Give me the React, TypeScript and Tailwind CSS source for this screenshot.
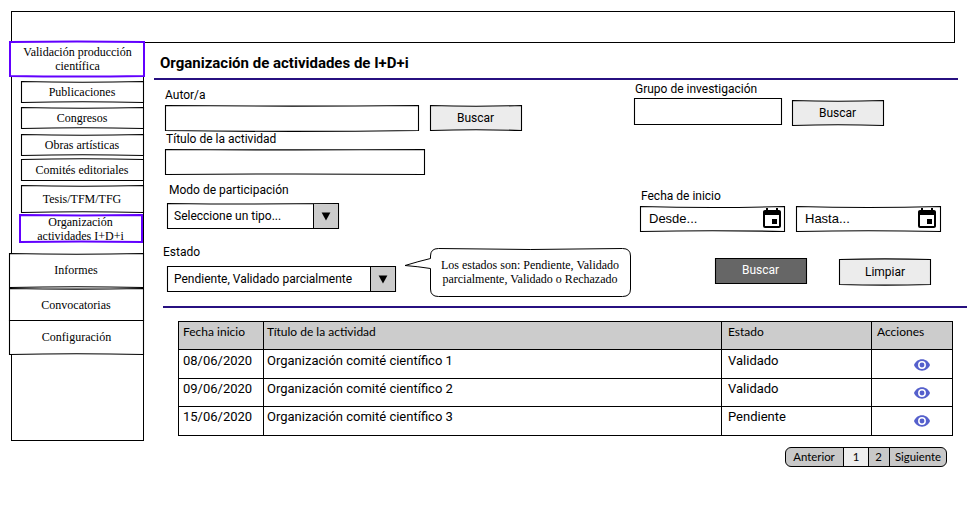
import type { ReactNode } from "react";
import { MdEvent } from "react-icons/md";

type BoxProps = {
  w: number;
  h: number;
  /** Vertical bow of the top and bottom strokes; positive bends downwards. */
  top?: number;
  bottom?: number;
  stroke?: string;
  fill?: string;
  thick?: number;
  className: string;
  children?: ReactNode;
};

/** A box whose outline is slightly bowed, as if drawn by hand. */
function Box({ w, h, top = 0, bottom = 0, stroke = "#000", fill = "#fff", thick = 1.1, className, children }: BoxProps) {
  const i = thick > 1.5 ? thick / 2 : 0.5;
  return (
    <div className={`relative isolate flex shrink-0 ${className}`}>
      <svg viewBox={`0 0 ${w} ${h}`} className="absolute inset-0 -z-10 h-full w-full overflow-visible" aria-hidden="true">
        <path
          d={`M${i} ${i}Q${w / 2} ${i + top * 2} ${w - i} ${i}V${h - i}Q${w / 2} ${h - i + bottom * 2} ${i} ${h - i}Z`}
          fill={fill}
          stroke={stroke}
          strokeWidth={thick}
        />
      </svg>
      {children}
    </div>
  );
}

const serif = "font-['Liberation_Serif',serif] text-[12px] leading-[14px]";
const label = "text-[12px] leading-[14px] whitespace-nowrap";

function Sidebar() {
  const item = `items-center justify-center text-center ${serif}`;
  return (
    <nav className="ml-[11px] flex h-[398px] w-[133px] shrink-0 flex-col border-x border-b border-black">
      <Box w={136} h={36} top={-0.5} bottom={0.5} thick={2} stroke="#6200ff" className={`-mt-[2px] -ml-[3px] h-[36px] w-[136px] pl-px ${item}`}>
        <span>Validación producción<br />científica</span>
      </Box>
      <Box w={123} h={22} top={0.7} bottom={-0.7} className={`mt-[4px] ml-[9px] h-[22px] w-[123px] pr-px ${item}`}>Publicaciones</Box>
      <Box w={123} h={22} top={0.7} bottom={-0.7} className={`mt-[4px] ml-[9px] h-[22px] w-[123px] pr-px ${item}`}>Congresos</Box>
      <Box w={123} h={22} top={0.7} bottom={-0.7} className={`mt-[5px] ml-[9px] h-[22px] w-[123px] pr-px ${item}`}>Obras artísticas</Box>
      <Box w={123} h={22} top={-0.7} className={`mt-[3px] ml-[9px] h-[22px] w-[123px] pr-px ${item}`}>Comités editoriales</Box>
      <Box w={123} h={28} top={0.7} bottom={-0.7} className={`mt-[4px] ml-[9px] h-[28px] w-[123px] pr-px ${item}`}>Tesis/TFM/TFG</Box>
      <Box w={124} h={29} top={0.4} bottom={-0.4} thick={2} stroke="#6200ff" className={`mt-px ml-[7px] h-[29px] w-[124px] pt-[1px] pr-px ${item}`}>
        <span>Organización<br />actividades I+D+i</span>
      </Box>
      <Box w={135} h={35} top={0.8} bottom={-0.7} className={`mt-[10px] -ml-[3px] h-[35px] w-[135px] pr-px pb-[2px] ${item}`}>Informes</Box>
      <Box w={135} h={33} top={0.6} className={`-ml-[3px] h-[33px] w-[135px] pt-px pr-px ${item}`}>Convocatorias</Box>
      <Box w={135} h={35} bottom={-0.8} className={`-mt-px -ml-[3px] h-[35px] w-[135px] pb-[2px] ${item}`}>Configuración</Box>
    </nav>
  );
}

function Arrow() {
  return (
    <svg viewBox="0 0 10 9" className="mt-px h-[9px] w-[10px]" aria-hidden="true">
      <path d="M.6.6H9.4L5 8.6Z" fill="#000" />
    </svg>
  );
}

function Eye() {
  return (
    <svg viewBox="0 0 16 12" className="ml-px h-[12px] w-[16px]" aria-hidden="true">
      <path d="M0 6C1.3 2.7 4.3.3 8 .3S14.7 2.7 16 6C14.7 9.3 11.7 11.7 8 11.7S1.3 9.3 0 6Z" fill="#5560cc" />
      <circle cx="8" cy="6" r="3.200" fill="none" stroke="#fff" strokeWidth="1.500" />
    </svg>
  );
}

function Callout() {
  return (
    <div className={`relative isolate flex h-[49px] w-[201px] items-center justify-center pr-px pb-[2px] text-center ${serif}`}>
      <svg viewBox="0 0 201 49" className="absolute inset-0 -z-10 h-full w-full overflow-visible" aria-hidden="true">
        <path
          d="M8.5.5Q100 2.5 192.5.5Q200.5.5 200.5 8V41Q200.5 48.5 192.5 48.5H8.5Q.5 48.5.5 41V20.5Q-12 18.5-25 17.5Q-12 13.5.5 10.5V8Q.5.5 8.5.5Z"
          fill="#fff"
          stroke="#000"
        />
      </svg>
      <span>Los estados son: Pendiente, Validado<br />parcialmente, Validado o Rechazado</span>
    </div>
  );
}

function DateField({ text, inset }: { text: string; inset: string }) {
  return (
    <Box w={145} h={26} top={1} bottom={-0.8} className={`h-[26px] w-[145px] items-center justify-between pl-[9px] font-['Liberation_Sans',sans-serif] text-[13px] ${inset}`}>
      <span>{text}</span>
      <MdEvent className="size-[24px]" />
    </Box>
  );
}

function Filters() {
  const button = "h-[26px] w-[92px] items-center justify-center text-[12px]";
  return (
    <section className="flex h-[226px]">
      <div className="flex w-[480px] shrink-0 flex-col">
        <div className={`mt-[8px] ml-[11px] ${label}`}>Autor/a</div>
        <div className="mt-[3px] ml-[11px] flex gap-[11px]">
          <Box w={254} h={26} top={0.6} bottom={0.9} className="h-[26px] w-[254px]" />
          <Box w={92} h={26} top={0.7} bottom={-0.7} fill="#ececec" className={`pr-px ${button}`}>Buscar</Box>
        </div>
        <div className={`mt-[1px] ml-[12px] ${label}`}>Título de la actividad</div>
        <Box w={260} h={26} top={0.4} bottom={-0.5} className="mt-[3px] ml-[11px] h-[26px] w-[260px]" />
        <div className={`mt-[8px] ml-[15px] ${label}`}>Modo de participación</div>
        <Box w={172} h={26} top={0.5} className="mt-[6px] ml-[13px] h-[26px] w-[172px] items-center p-px text-[12px]">
          <span className="w-[145px] pl-[6px]">Seleccione un tipo...</span>
          <span className="flex h-full flex-1 items-center justify-center border-l border-black bg-[#ccc]"><Arrow /></span>
        </Box>
        <div className="flex">
          <div className="flex w-[276px] flex-col">
            <div className={`mt-[16px] ml-[9px] ${label}`}>Estado</div>
            <Box w={229} h={26} className="mt-[7px] ml-[13px] h-[26px] w-[229px] items-center p-px text-[12px]">
              <span className="w-[202px] pl-[6px] whitespace-nowrap">Pendiente, Validado parcialmente</span>
              <span className="flex h-full flex-1 items-center justify-center border-l border-black bg-[#ccc]"><Arrow /></span>
            </Box>
          </div>
          <div className="mt-[19px]"><Callout /></div>
        </div>
      </div>
      <div className="flex flex-1 flex-col">
        <div className={`mt-[2px] ml-px ${label}`}>Grupo de investigación</div>
        <div className="mt-[2px] flex gap-[10px]">
          <Box w={148} h={27} className="h-[27px] w-[148px]" />
          <Box w={92} h={26} top={0.7} bottom={-0.7} fill="#ececec" className={`mt-[2px] pr-px ${button}`}>Buscar</Box>
        </div>
        <div className={`mt-[63px] ml-[7px] ${label}`}>Fecha de inicio</div>
        <div className="mt-[3px] ml-[6px] flex gap-[11px]">
          <DateField text="Desde..." inset="pr-px" />
          <DateField text="Hasta..." inset="pr-[2px]" />
        </div>
        <div className="mt-[26px] ml-[81px] flex gap-[32px]">
          <Box w={92} h={26} fill="#666" className={`${button} pr-px pb-[2px] text-white`}>Buscar</Box>
          <Box w={92} h={26} top={-0.6} bottom={0.6} fill="#ececec" className={`mt-px ${button}`}>Limpiar</Box>
        </div>
      </div>
    </section>
  );
}

const rows = [
  { date: "08/06/2020", title: "Organización comité científico 1", state: "Validado" },
  { date: "09/06/2020", title: "Organización comité científico 2", state: "Validado" },
  { date: "15/06/2020", title: "Organización comité científico 3", state: "Pendiente" },
];

function Results() {
  return (
    <table className="mt-[13px] ml-[24px] w-[775px] table-fixed border-collapse text-[13px] leading-[15px]">
      <colgroup>
        <col className="w-[85px]" />
        <col className="w-[458px]" />
        <col className="w-[150px]" />
        <col className="w-[81px]" />
      </colgroup>
      <thead className="bg-[#ccc] text-left font-['Lato',sans-serif] text-[12px]">
        <tr className="h-[28px] align-top [&>th]:border [&>th]:border-black [&>th]:pt-[2px] [&>th]:font-normal">
          <th className="pl-[4px]">Fecha inicio</th>
          <th className="pl-[3px]">Título de la actividad</th>
          <th className="pl-[6px]">Estado</th>
          <th className="pl-[5px]">Acciones</th>
        </tr>
      </thead>
      <tbody>
        {rows.map((row) => (
          <tr key={row.date} className="h-[28.6px] align-top [&>td]:border [&>td]:border-black [&>td]:pt-[2.3px] [&:first-child>td]:pt-[3px]">
            <td className="pl-[4px]">{row.date}</td>
            <td className="pl-[3px]">{row.title}</td>
            <td className="pl-[6px]">{row.state}</td>
            <td className="pl-[41px]"><div className="pt-[6px]"><Eye /></div></td>
          </tr>
        ))}
      </tbody>
    </table>
  );
}

function Pagination() {
  return (
    <div className="mt-[11px] ml-[631px] flex h-[20px] w-[162px] overflow-hidden rounded-[6px] border border-black bg-[#c8c8c8] font-['Lato',sans-serif] text-[11.4px] [&>span]:flex [&>span]:items-center [&>span]:justify-center">
      <span className="w-[57px] pr-px">Anterior</span>
      <span className="w-[26px] border-x border-black bg-[#eee]">1</span>
      <span className="w-[21px] border-r border-black pr-px">2</span>
      <span className="flex-1">Siguiente</span>
    </div>
  );
}

export default function App() {
  return (
    <div className="h-[511px] w-[977px] overflow-hidden bg-white pt-[11px] font-['Roboto',sans-serif] text-black">
      <header className="ml-[11px] h-[32px] w-[944px] border border-black" />
      <div className="flex">
        <Sidebar />
        <main className="ml-[10px] flex flex-1 flex-col">
          <h1 className="ml-[6px] h-[35px] pt-[11px] text-[15px] leading-[18px] font-bold">Organización de actividades de I+D+i</h1>
          <div className="h-[2px] w-[804px] bg-[#271080]" />
          <Filters />
          <div className="ml-[9px] h-[2px] w-[804px] bg-[#271080]" />
          <Results />
          <Pagination />
        </main>
      </div>
    </div>
  );
}
